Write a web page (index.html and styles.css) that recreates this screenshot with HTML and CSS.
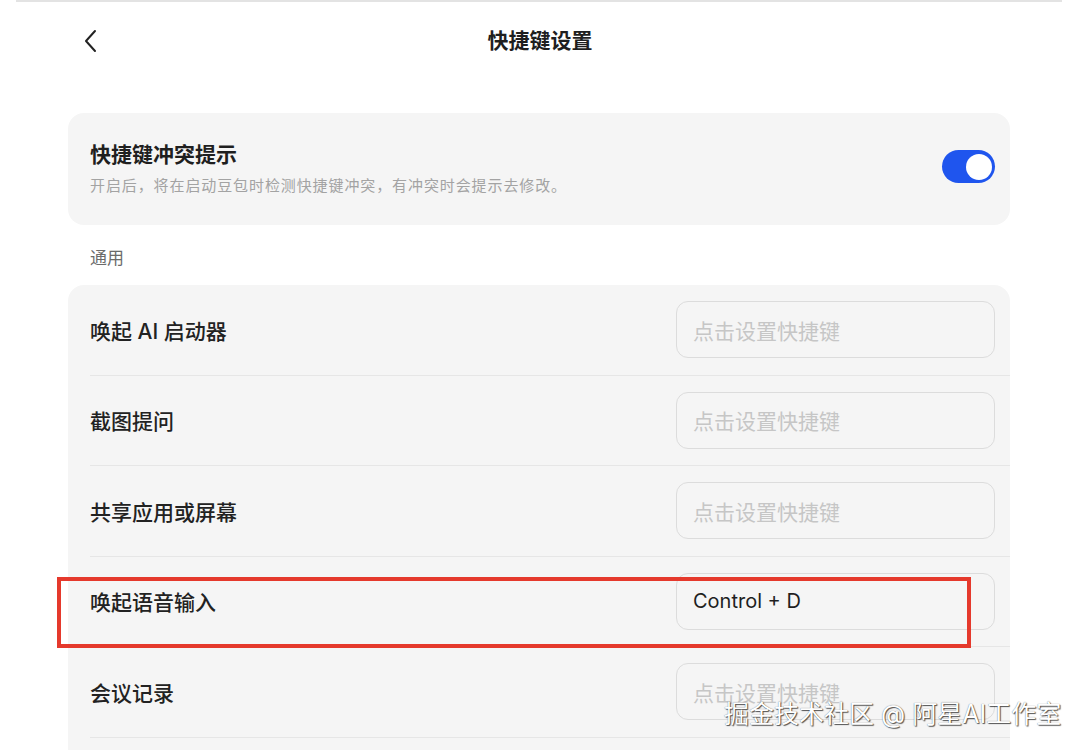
FILE: index.html
```html
<!DOCTYPE html>
<html lang="zh-CN">
<head>
<meta charset="utf-8">
<title>快捷键设置</title>
<link rel="stylesheet" href="styles.css">
</head>
<body>
<div class="topline"></div>
<header class="header">
  <div class="back">
    <svg width="16" height="24" viewBox="0 0 16 24"><polyline points="12,2 3,12 12,22" fill="none" stroke="#222" stroke-width="2" stroke-linecap="round" stroke-linejoin="round"/></svg>
  </div>
  <div class="title">快捷键设置</div>
  <div></div>
</header>
<main class="content">
  <section class="card card-toggle">
    <div class="toggle-text">
      <div class="toggle-title">快捷键冲突提示</div>
      <div class="toggle-desc">开启后，将在启动豆包时检测快捷键冲突，有冲突时会提示去修改。</div>
    </div>
    <div class="switch"><div class="knob"></div></div>
  </section>
  <div class="section-label">通用</div>
  <section class="card list">
    <div class="row"><span class="label">唤起 AI 启动器</span><div class="key placeholder">点击设置快捷键</div></div>
    <div class="row"><span class="label">截图提问</span><div class="key placeholder">点击设置快捷键</div></div>
    <div class="row"><span class="label">共享应用或屏幕</span><div class="key placeholder">点击设置快捷键</div></div>
    <div class="row"><span class="label">唤起语音输入</span><div class="key">Control + D</div></div>
    <div class="row"><span class="label">会议记录</span><div class="key placeholder">点击设置快捷键</div></div>
  </section>
</main>
<div class="annot"></div>
<div class="watermark">掘金技术社区 @ 阿星AI工作室</div>
</body>
</html>
```

FILE: styles.css
```css
html, body {
  margin: 0;
  padding: 0;
  background: #ffffff;
  overflow: hidden;
}
body {
  width: 1080px;
  height: 750px;
  position: relative;
  font-family: Inter, "Noto Sans CJK SC", "Noto Sans", sans-serif;
  color: #222222;
}
.topline {
  height: 2px;
  margin: 0 18px 0 16px;
  background: #e3e3e3;
}
.header {
  height: 74px;
  display: grid;
  grid-template-columns: 1fr auto 1fr;
  align-items: center;
}
.back {
  padding-left: 83px;
  display: flex;
  align-items: center;
  height: 24px;
  margin-top: 3px;
}
.title {
  font-size: 21px;
  font-weight: 700;
  color: #1f1f1f;
}
.content {
  padding: 37px 70px 0 68px;
}
.card {
  background: #f5f5f5;
  border-radius: 16px;
}
.card-toggle {
  height: 112px;
  box-sizing: border-box;
  padding: 0 15px 0 22px;
  display: flex;
  align-items: center;
  justify-content: space-between;
}
.toggle-title {
  font-size: 21px;
  font-weight: 700;
  line-height: 26px;
  color: #1f1f1f;
  margin-bottom: 8px;
}
.toggle-desc {
  font-size: 15px;
  line-height: 20px;
  color: #a3a3a3;
  letter-spacing: 0.9px;
}
.switch {
  width: 53px;
  height: 33px;
  border-radius: 17px;
  background: #1f55ee;
  display: flex;
  align-items: center;
  justify-content: flex-end;
  padding-right: 3px;
  box-sizing: border-box;
  margin-bottom: 5px;
}
.knob {
  width: 26px;
  height: 26px;
  border-radius: 50%;
  background: #ffffff;
}
.section-label {
  margin: 21px 0 15px 22px;
  font-size: 17px;
  line-height: 24px;
  color: #6b6b6b;
}
.list {
  border-radius: 16px 16px 0 0;
  padding-left: 22px;
  padding-bottom: 40px;
}
.row {
  height: 90.5px;
  box-sizing: border-box;
  border-bottom: 1px solid #e6e6e6;
  display: flex;
  align-items: center;
  justify-content: space-between;
  padding-right: 15px;
}
.label {
  font-size: 21px;
  font-weight: 500;
  color: #222222;
}
.key {
  width: 319px;
  height: 57px;
  box-sizing: border-box;
  border: 1px solid #dcdcdc;
  border-radius: 12px;
  padding-left: 16px;
  display: flex;
  align-items: center;
  font-size: 20px;
  color: #1f1f1f;
}
.key.placeholder {
  font-size: 21px;
  color: #c6c6c6;
}
.annot {
  position: absolute;
  left: 57px;
  top: 577px;
  width: 914px;
  height: 71px;
  box-sizing: border-box;
  border: 4px solid #e5392c;
}
.watermark {
  position: absolute;
  left: 724px;
  top: 697px;
  font-size: 25px;
  line-height: 34px;
  color: #ffffff;
  white-space: nowrap;
  text-shadow: 1px 1px 1px rgba(0,0,0,0.65), 0 0 1px rgba(0,0,0,0.6);
}
```
